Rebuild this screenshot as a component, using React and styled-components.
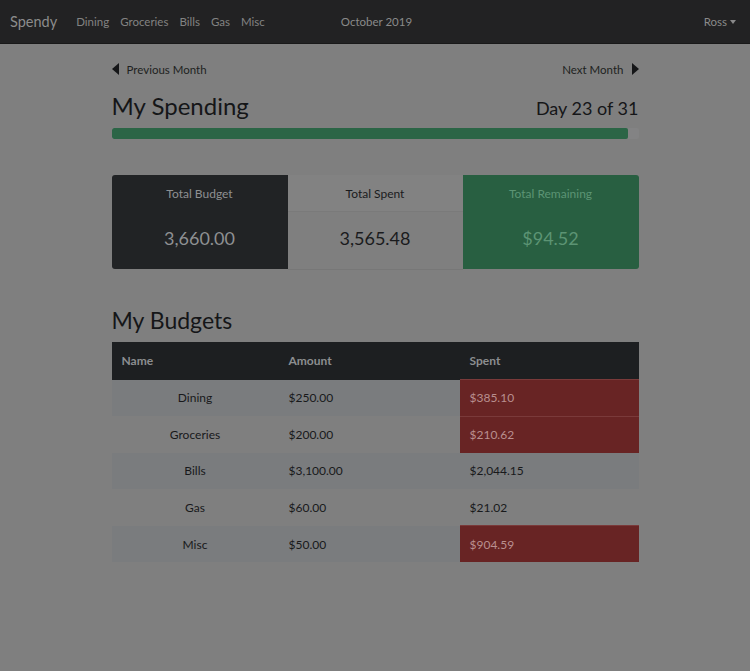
import React from 'react'
import styled, { createGlobalStyle } from 'styled-components'

const GlobalStyle = createGlobalStyle`
    body {
        margin: 0;
        background: #7f7f7f;
        font-family: Lato, "Noto Sans", sans-serif;
        color: #151618;
    }
`

const budgets = [
    { name: 'Dining', amount: '$250.00', spent: '$385.10', over: true },
    { name: 'Groceries', amount: '$200.00', spent: '$210.62', over: true },
    { name: 'Bills', amount: '$3,100.00', spent: '$2,044.15', over: false },
    { name: 'Gas', amount: '$60.00', spent: '$21.02', over: false },
    { name: 'Misc', amount: '$50.00', spent: '$904.59', over: true },
]

function App() {
    return (
        <>
            <GlobalStyle />
            <Navbar>
                <Brand>Spendy</Brand>
                <NavLinks>
                    <NavLink>Dining</NavLink>
                    <NavLink>Groceries</NavLink>
                    <NavLink>Bills</NavLink>
                    <NavLink>Gas</NavLink>
                    <NavLink>Misc</NavLink>
                </NavLinks>
                <Month>October 2019</Month>
                <User>Ross <Caret /></User>
            </Navbar>

            <Container>
                <MonthNav>
                    <MonthLink>
                        <svg width="7" height="12" viewBox="0 0 7 12"><path d="M7 0 L0 6 L7 12 Z" fill="#151618" /></svg>
                        Previous Month
                    </MonthLink>
                    <MonthLink>
                        Next Month
                        <svg width="7" height="12" viewBox="0 0 7 12"><path d="M0 0 L7 6 L0 12 Z" fill="#151618" /></svg>
                    </MonthLink>
                </MonthNav>

                <HeaderRow>
                    <Title>My Spending</Title>
                    <DayCount>Day 23 of 31</DayCount>
                </HeaderRow>
                <Progress>
                    <ProgressBar style={{ width: '98%' }} />
                </Progress>

                <Cards>
                    <StatCard variant="dark">
                        <CardHeader variant="dark">Total Budget</CardHeader>
                        <CardValue>3,660.00</CardValue>
                    </StatCard>
                    <StatCard variant="light">
                        <CardHeader variant="light">Total Spent</CardHeader>
                        <CardValue>3,565.48</CardValue>
                    </StatCard>
                    <StatCard variant="green">
                        <CardHeader variant="green">Total Remaining</CardHeader>
                        <CardValue>$94.52</CardValue>
                    </StatCard>
                </Cards>

                <SubTitle>My Budgets</SubTitle>
                <Table>
                    <thead>
                        <tr>
                            <Th style={{ width: 147 }}>Name</Th>
                            <Th style={{ width: 161 }}>Amount</Th>
                            <Th>Spent</Th>
                        </tr>
                    </thead>
                    <tbody>
                        {budgets.map((b, i) => (
                            <Row key={b.name} striped={i % 2 === 0}>
                                <NameCell>{b.name}</NameCell>
                                <Td>{b.amount}</Td>
                                <Td over={b.over}>{b.spent}</Td>
                            </Row>
                        ))}
                    </tbody>
                </Table>
            </Container>
        </>
    )
}

export default App

const Navbar = styled.nav`
    display: flex;
    align-items: center;
    height: 43px;
    padding: 0 10px;
    background: #222223;
    box-shadow: 0 1px 0 #191919;
`

const Brand = styled.span`
    font-size: 14.5px;
    color: #8c8c8c;
    margin-right: 19px;
`

const NavLinks = styled.div`
    display: flex;
    gap: 11px;
`

const NavLink = styled.span`
    font-size: 11.5px;
    color: #828282;
`

const Month = styled.span`
    font-size: 11.5px;
    color: #8a8a8a;
    margin-left: 76px;
`

const User = styled.span`
    margin-left: auto;
    margin-right: 4px;
    font-size: 11.5px;
    color: #8a8a8a;
    display: flex;
    align-items: center;
    gap: 3px;
`

const Caret = styled.span`
    width: 0;
    height: 0;
    border-left: 3.5px solid transparent;
    border-right: 3.5px solid transparent;
    border-top: 4px solid #8a8a8a;
`

const Container = styled.main`
    width: 527px;
    margin: 0 auto;
    padding-top: 18px;
`

const MonthNav = styled.div`
    display: flex;
    justify-content: space-between;
    align-items: center;
    height: 16px;
`

const MonthLink = styled.span`
    display: flex;
    align-items: center;
    gap: 8px;
    font-size: 11.5px;
    color: #1e1f21;
`

const HeaderRow = styled.div`
    display: flex;
    justify-content: space-between;
    align-items: baseline;
    margin-top: 14px;
`

const Title = styled.h2`
    margin: 0;
    font-size: 24px;
    font-weight: 400;
    color: #151618;
`

const DayCount = styled.span`
    font-size: 18px;
    color: #151618;
`

const Progress = styled.div`
    height: 11px;
    margin-top: 8px;
    background: #838384;
    border-radius: 2px;
    overflow: hidden;
`

const ProgressBar = styled.div`
    height: 100%;
    background: #2b6546;
    border-radius: 2px;
`

const Cards = styled.div`
    display: grid;
    grid-template-columns: 176px 175px 176px;
    margin-top: 36px;
`

const cardBg = { dark: '#212325', light: '#7f7f7f', green: '#285f41' }
const cardColor = { dark: '#8e9092', light: '#1a1b1d', green: '#5c9474' }

const StatCard = styled.div`
    display: flex;
    flex-direction: column;
    height: 94px;
    background: ${props => cardBg[props.variant]};
    color: ${props => cardColor[props.variant]};
    border-radius: ${props => props.variant === 'dark' ? '3px 0 0 3px' : props.variant === 'green' ? '0 3px 3px 0' : '0'};
    border-bottom: ${props => props.variant === 'light' ? '1px solid #777' : 'none'};
    text-align: center;
`

const CardHeader = styled.div`
    height: 36px;
    line-height: 38px;
    font-size: 12px;
    background: ${props => props.variant === 'light' ? '#828282' : 'transparent'};
    border-bottom: 1px solid ${props => props.variant === 'light' ? '#7a7a7a' : 'transparent'};
`

const CardValue = styled.div`
    flex: 1;
    display: flex;
    align-items: center;
    justify-content: center;
    font-size: 18px;
    padding-bottom: 6px;
`

const SubTitle = styled.h2`
    margin: 36px 0 8px;
    font-size: 23px;
    font-weight: 400;
    color: #151618;
`

const Table = styled.table`
    width: 100%;
    border-collapse: collapse;
    font-size: 12px;
`

const Th = styled.th`
    height: 37px;
    padding: 0 10px;
    text-align: left;
    font-weight: 700;
    color: #8c8e90;
    background: #1d1f21;
`

const Row = styled.tr`
    background: ${props => props.striped ? '#7a7c7e' : '#7f7f7f'};
`

const Td = styled.td`
    height: 35.6px;
    padding: 0 10px;
    color: ${props => props.over ? '#b98f8f' : '#18191b'};
    background: ${props => props.over ? '#682424' : 'transparent'};
    border-top: 1px solid ${props => props.over ? '#7a3a3a' : 'transparent'};
`

const NameCell = styled(Td)`
    text-align: center;
`
